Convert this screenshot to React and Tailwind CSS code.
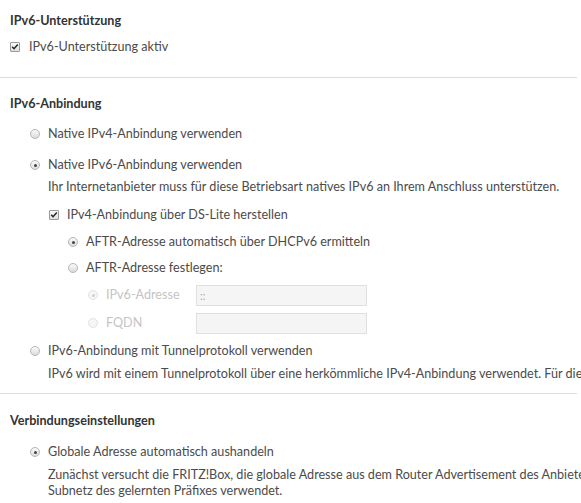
import React from 'react';

const font = { fontFamily: 'Lato, "Liberation Sans", sans-serif' };

function Radio({ checked, disabled }) {
  return (
    <span
      className={`relative inline-block w-[10px] h-[10px] rounded-full border shrink-0 ${
        disabled ? 'border-[#e2e2e2] bg-[#f6f6f6]' : 'border-[#b5b5b5] bg-gradient-to-b from-[#fafafa] to-[#dcdcdc]'
      }`}
    >
      {checked && (
        <span
          className={`absolute left-[2.5px] top-[2.5px] w-[3px] h-[3px] rounded-full ${disabled ? 'bg-[#cfcfcf]' : 'bg-[#444]'}`}
        />
      )}
    </span>
  );
}

function Checkbox() {
  return (
    <span className="relative inline-block w-[10px] h-[10px] border border-[#9a9a9a] bg-gradient-to-b from-[#fafafa] to-[#e0e0e0] rounded-[1px] shrink-0">
      <svg viewBox="0 0 10 10" className="absolute left-0 top-0 w-[8px] h-[8px]">
        <path d="M1.5 4.8 L3.8 7.2 L8.5 1.8" fill="none" stroke="#222" strokeWidth="1.8" />
      </svg>
    </span>
  );
}

function Row({ children, className = '', gap = 'gap-[8px]' }) {
  return <div className={`flex items-center h-[20px] whitespace-nowrap ${gap} ${className}`}>{children}</div>;
}

export default function App() {
  return (
    <div className="w-[581px] h-[503px] overflow-hidden bg-white text-[12.6px] text-[#4b4b4b]" style={font}>
      {/* IPv6-Unterstützung */}
      <div className="px-[10px]">
        <div className="mt-[11px] h-[20px] leading-[20px] font-bold text-[#333]">IPv6-Unterstützung</div>
        <Row className="mt-[6px]" gap="gap-[9px]">
          <Checkbox />
          <span>IPv6-Unterstützung aktiv</span>
        </Row>
      </div>
      <div className="mt-[20px] h-px bg-[#dcdcdc] mr-[4px]" />

      {/* IPv6-Anbindung */}
      <div className="px-[10px]">
        <div className="mt-[16px] h-[20px] leading-[20px] font-bold text-[#333]">IPv6-Anbindung</div>
        <div className="pl-[20px]">
          <Row className="mt-[10px]">
            <Radio />
            <span>Native IPv4-Anbindung verwenden</span>
          </Row>
          <Row className="mt-[11px]">
            <Radio checked />
            <span>Native IPv6-Anbindung verwenden</span>
          </Row>
          <div className="pl-[18px] mt-[2px] h-[20px] leading-[20px] whitespace-nowrap">
            Ihr Internetanbieter muss für diese Betriebsart natives IPv6 an Ihrem Anschluss unterstützen.
          </div>
          <div className="pl-[19px]">
            <Row className="mt-[8px]" gap="gap-[8px]">
              <Checkbox />
              <span>IPv4-Anbindung über DS-Lite herstellen</span>
            </Row>
            <div className="pl-[19px]">
              <Row className="mt-[7px]">
                <Radio checked />
                <span>AFTR-Adresse automatisch über DHCPv6 ermitteln</span>
              </Row>
              <Row className="mt-[6px]">
                <Radio />
                <span>AFTR-Adresse festlegen:</span>
              </Row>
              <div className="pl-[20px] text-[#c4c4c4]">
                <Row className="mt-[7px]">
                  <Radio checked disabled />
                  <span className="w-[82px]">IPv6-Adresse</span>
                  <div className="w-[171px] h-[21px] border border-[#e0e0e0] bg-[#f5f5f5] text-[11px] leading-[19px] pl-[3px] text-[#aaa]">::</div>
                </Row>
                <Row className="mt-[8px]">
                  <Radio disabled />
                  <span className="w-[82px]">FQDN</span>
                  <div className="w-[171px] h-[21px] border border-[#e0e0e0] bg-[#f5f5f5]" />
                </Row>
              </div>
            </div>
          </div>
          <Row className="mt-[8px]">
            <Radio />
            <span>IPv6-Anbindung mit Tunnelprotokoll verwenden</span>
          </Row>
          <div className="pl-[18px] mt-[3px] h-[20px] leading-[20px] whitespace-nowrap">
            IPv6 wird mit einem Tunnelprotokoll über eine herkömmliche IPv4-Anbindung verwendet. Für die Nutzung ist ein Konto bei einem Tunnelanbieter erforderlich.
          </div>
        </div>
      </div>
      <div className="mt-[9px] h-px bg-[#dcdcdc] mr-[4px]" />

      {/* Verbindungseinstellungen */}
      <div className="px-[10px]">
        <div className="mt-[17px] h-[20px] leading-[20px] font-bold text-[#333]">Verbindungseinstellungen</div>
        <div className="pl-[20px]">
          <Row className="mt-[11px]">
            <Radio checked />
            <span>Globale Adresse automatisch aushandeln</span>
          </Row>
          <div className="pl-[18px] mt-[5px] leading-[16px] whitespace-nowrap">
            <div>Zunächst versucht die FRITZ!Box, die globale Adresse aus dem Router Advertisement des Anbieters zu ermitteln. Gelingt dies nicht, wird eine Adresse aus dem</div>
            <div>Subnetz des gelernten Präfixes verwendet.</div>
          </div>
        </div>
      </div>
    </div>
  );
}
